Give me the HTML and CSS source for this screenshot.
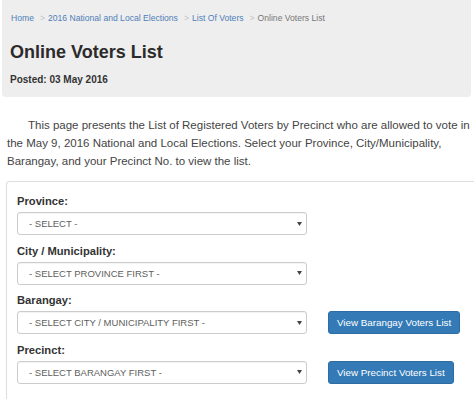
FILE: index.html
```html
<!DOCTYPE html>
<html lang="en">
<head>
<meta charset="utf-8">
<title>Online Voters List</title>
<link rel="stylesheet" href="styles.css">
</head>
<body>
<div class="page-header">
  <nav class="crumbs">
    <a class="crumb-link" href="#">Home</a><span class="sep">&gt;</span><a class="crumb-link" href="#">2016 National and Local Elections</a><span class="sep">&gt;</span><a class="crumb-link" href="#">List Of Voters</a><span class="sep">&gt;</span><span class="crumb-active">Online Voters List</span>
  </nav>
  <h1 class="title">Online Voters List</h1>
  <div class="posted">Posted: 03 May 2016</div>
</div>

<p class="intro">This page presents the List of Registered Voters by Precinct who are allowed to vote in<br>the May 9, 2016 National and Local Elections. Select your Province, City/Municipality,<br>Barangay, and your Precinct No. to view the list.</p>

<div class="panel">
  <div class="group">
    <div class="label">Province:</div>
    <div class="row">
      <div class="select"><span>- SELECT -</span><svg class="caret" width="5" height="4" viewBox="0 0 5 4"><path d="M0 0H5L2.5 4Z" fill="#444"/></svg></div>
    </div>
  </div>
  <div class="group">
    <div class="label">City / Municipality:</div>
    <div class="row">
      <div class="select"><span>- SELECT PROVINCE FIRST -</span><svg class="caret" width="5" height="4" viewBox="0 0 5 4"><path d="M0 0H5L2.5 4Z" fill="#444"/></svg></div>
    </div>
  </div>
  <div class="group">
    <div class="label">Barangay:</div>
    <div class="row">
      <div class="select"><span>- SELECT CITY / MUNICIPALITY FIRST -</span><svg class="caret" width="5" height="4" viewBox="0 0 5 4"><path d="M0 0H5L2.5 4Z" fill="#444"/></svg></div>
      <button class="btn">View Barangay Voters List</button>
    </div>
  </div>
  <div class="group">
    <div class="label">Precinct:</div>
    <div class="row">
      <div class="select"><span>- SELECT BARANGAY FIRST -</span><svg class="caret" width="5" height="4" viewBox="0 0 5 4"><path d="M0 0H5L2.5 4Z" fill="#444"/></svg></div>
      <button class="btn">View Precinct Voters List</button>
    </div>
  </div>
</div>
</body>
</html>
```

FILE: styles.css
```css
html, body {
  margin: 0;
  padding: 0;
  background: #fff;
  font-family: "Liberation Sans", Arial, sans-serif;
  color: #333;
  overflow: hidden;
}

.page-header {
  margin: 0 3px 0 2px;
  padding: 12px 8px 11.5px 9px;
  background: #eeeeee;
  border-radius: 0 0 4px 4px;
}

.crumbs {
  font-size: 8.6px;
  line-height: 12px;
  white-space: nowrap;
}

.crumb-link {
  color: #4f80b8;
  text-decoration: none;
}

.sep {
  color: #c4c4c4;
  margin: 0 3px 0 6px;
}

.crumb-active {
  color: #777;
}

.title {
  margin: 17px 0 0 -1px;
  font-size: 18px;
  line-height: 22px;
  font-weight: bold;
  color: #2b2b2b;
}

.posted {
  margin: 10.5px 0 0 -1px;
  font-size: 10px;
  line-height: 12px;
  font-weight: bold;
  color: #333;
}

.intro {
  margin: 19px 0 0 0;
  padding: 0 0 0 7px;
  font-size: 11.5px;
  line-height: 18px;
  color: #444;
  text-indent: 21px;
  white-space: nowrap;
}

.panel {
  margin: 11px 0 0 6px;
  width: 470px;
  height: 219px;
  border: 1px solid #dddddd;
  border-right: none;
  border-bottom: none;
  border-radius: 4px 0 0 0;
  padding: 12px 0 0 10px;
  box-sizing: border-box;
}

.group {
  margin-bottom: 8.5px;
}

.label {
  font-size: 11.2px;
  line-height: 14px;
  font-weight: bold;
  color: #333;
  margin-bottom: 4px;
}

.row {
  display: flex;
  align-items: flex-start;
  gap: 21px;
}

.select {
  box-sizing: border-box;
  width: 290px;
  height: 23px;
  border: 1px solid #cccccc;
  border-radius: 3px;
  background: #fff;
  display: flex;
  align-items: center;
  justify-content: space-between;
  padding: 0 4px 0 11px;
  font-size: 9.5px;
  color: #5e5e5e;
  box-shadow: inset 0 1px 1px rgba(0,0,0,0.05);
}

.caret {
  display: block;
}

.btn {
  box-sizing: border-box;
  height: 23px;
  padding: 0 8px;
  border: 1px solid #2e6da4;
  border-radius: 3px;
  background: #337ab7;
  color: #fff;
  font-family: "Liberation Sans", Arial, sans-serif;
  font-size: 9.8px;
  line-height: 21px;
  cursor: pointer;
}
```
